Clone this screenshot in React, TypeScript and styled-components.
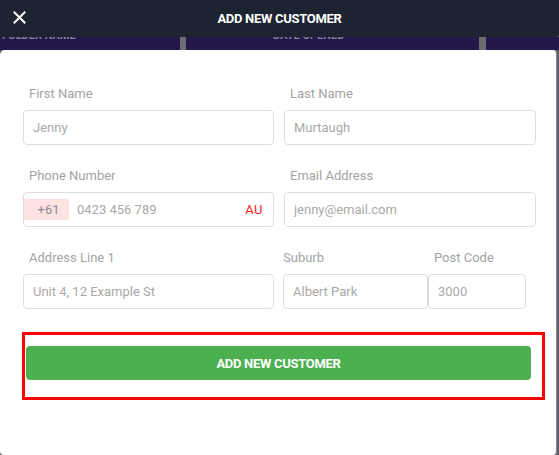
import styled, { createGlobalStyle } from 'styled-components'

const GlobalStyle = createGlobalStyle`
  html, body {
    margin: 0;
    padding: 0;
    background: #5f5f66;
    font-family: Roboto, Inter, "Liberation Sans", sans-serif;
  }
`

const Header = styled.header`
  position: relative;
  display: flex;
  align-items: center;
  justify-content: center;
  height: 37px;
  background: #1e2331;
  color: #ffffff;
  border-bottom-right-radius: 3px;
  z-index: 1;
`

const Title = styled.h1`
  margin: 0;
  font-size: 13px;
  font-weight: 700;
  letter-spacing: -0.3px;
`

const CloseButton = styled.button`
  position: absolute;
  left: 12px;
  top: 10px;
  display: flex;
  padding: 0;
  border: none;
  background: none;
  cursor: pointer;
`

const TableStrip = styled.div`
  display: grid;
  grid-template-columns: 180px 6px 293px 7px 1fr;
  height: 13px;
  background: #25174a;
  overflow: hidden;
`

const StripCell = styled.div<{ $pad?: number }>`
  padding-left: ${(p) => p.$pad ?? 0}px;
  margin-top: -8px;
  font-size: 11px;
  font-weight: 600;
  color: #8a85a0;
  white-space: nowrap;
`

const StripDivider = styled.div`
  background: #6e6e72;
`

const Card = styled.main`
  width: 557px;
  height: 405px;
  box-sizing: border-box;
  background: #ffffff;
  border-radius: 5px 4px 4px 4px;
  border-right: 1px solid #8a8a8a;
  padding: 35px 22px 0 23px;
`

const Row = styled.div<{ $cols: string; $gap?: number }>`
  display: grid;
  grid-template-columns: ${(p) => p.$cols};
  column-gap: ${(p) => p.$gap ?? 10}px;
  margin-bottom: 22px;
`

const Field = styled.label<{ $inset?: number }>`
  display: flex;
  flex-direction: column;
  margin-right: ${(p) => p.$inset ?? 0}px;
`

const Label = styled.span<{ $indent?: number }>`
  height: 17px;
  padding-left: ${(p) => p.$indent ?? 6}px;
  margin-bottom: 8px;
  font-size: 13px;
  line-height: 17px;
  color: #a3a3a3;
`

const Input = styled.input`
  height: 35px;
  box-sizing: border-box;
  padding: 0 9px;
  border: 1px solid #dedede;
  border-radius: 4px;
  font-family: inherit;
  font-size: 13px;
  color: #555;
  outline: none;

  &::placeholder {
    color: #a9a9a9;
  }
`

const PhoneBox = styled.div`
  display: flex;
  align-items: center;
  height: 35px;
  box-sizing: border-box;
  padding: 0 10px 0 0;
  border: 1px solid #dedede;
  border-radius: 4px;
`

const DialCode = styled.span`
  display: flex;
  align-items: center;
  justify-content: center;
  width: 45px;
  height: 21px;
  padding-left: 4px;
  box-sizing: border-box;
  background: #fde2e2;
  font-size: 13px;
  color: #8d8d8d;
`

const PhoneInput = styled.input`
  flex: 1;
  min-width: 0;
  border: none;
  padding: 0 0 0 8px;
  font-family: inherit;
  font-size: 13px;
  outline: none;

  &::placeholder {
    color: #a9a9a9;
  }
`

const Country = styled.span`
  font-size: 13px;
  color: #ff1a1a;
  letter-spacing: 0.5px;
`

const Highlight = styled.div`
  margin: 23px 0 0 -1px;
  width: 523px;
  height: 68px;
  box-sizing: border-box;
  border: 3px solid #ff0000;
  padding: 11px 11px 0 1px;
`

const SubmitButton = styled.button`
  width: 100%;
  height: 34px;
  border: none;
  border-radius: 4px;
  background: #4caf50;
  color: #ffffff;
  font-family: inherit;
  font-size: 13px;
  font-weight: 700;
  letter-spacing: -0.3px;
  cursor: pointer;
`

export default function App() {
  return (
    <>
      <GlobalStyle />
      <Header>
        <CloseButton aria-label="Close">
          <svg width="15" height="15" viewBox="0 0 15 15">
            <path d="M2.5 2.5 L12.5 12.5 M12.5 2.5 L2.5 12.5" stroke="#fff" strokeWidth="2" strokeLinecap="square" />
          </svg>
        </CloseButton>
        <Title>ADD NEW CUSTOMER</Title>
      </Header>
      <TableStrip>
        <StripCell $pad={2}>FOLDER NAME</StripCell>
        <StripDivider />
        <StripCell $pad={87}>DATE OPENED</StripCell>
        <StripDivider />
        <StripCell />
      </TableStrip>
      <Card>
        <Row $cols="251px 252px">
          <Field>
            <Label>First Name</Label>
            <Input placeholder="Jenny" />
          </Field>
          <Field>
            <Label>Last Name</Label>
            <Input placeholder="Murtaugh" />
          </Field>
        </Row>
        <Row $cols="251px 252px">
          <Field>
            <Label>Phone Number</Label>
            <PhoneBox>
              <DialCode>+61</DialCode>
              <PhoneInput placeholder="0423 456 789" />
              <Country>AU</Country>
            </PhoneBox>
          </Field>
          <Field>
            <Label>Email Address</Label>
            <Input placeholder="jenny@email.com" />
          </Field>
        </Row>
        <Row $cols="260px 145px 98px" $gap={0}>
          <Field $inset={9}>
            <Label>Address Line 1</Label>
            <Input placeholder="Unit 4, 12 Example St" />
          </Field>
          <Field>
            <Label $indent={0}>Suburb</Label>
            <Input placeholder="Albert Park" />
          </Field>
          <Field>
            <Label>Post Code</Label>
            <Input placeholder="3000" />
          </Field>
        </Row>
        <Highlight>
          <SubmitButton>ADD NEW CUSTOMER</SubmitButton>
        </Highlight>
      </Card>
    </>
  )
}
